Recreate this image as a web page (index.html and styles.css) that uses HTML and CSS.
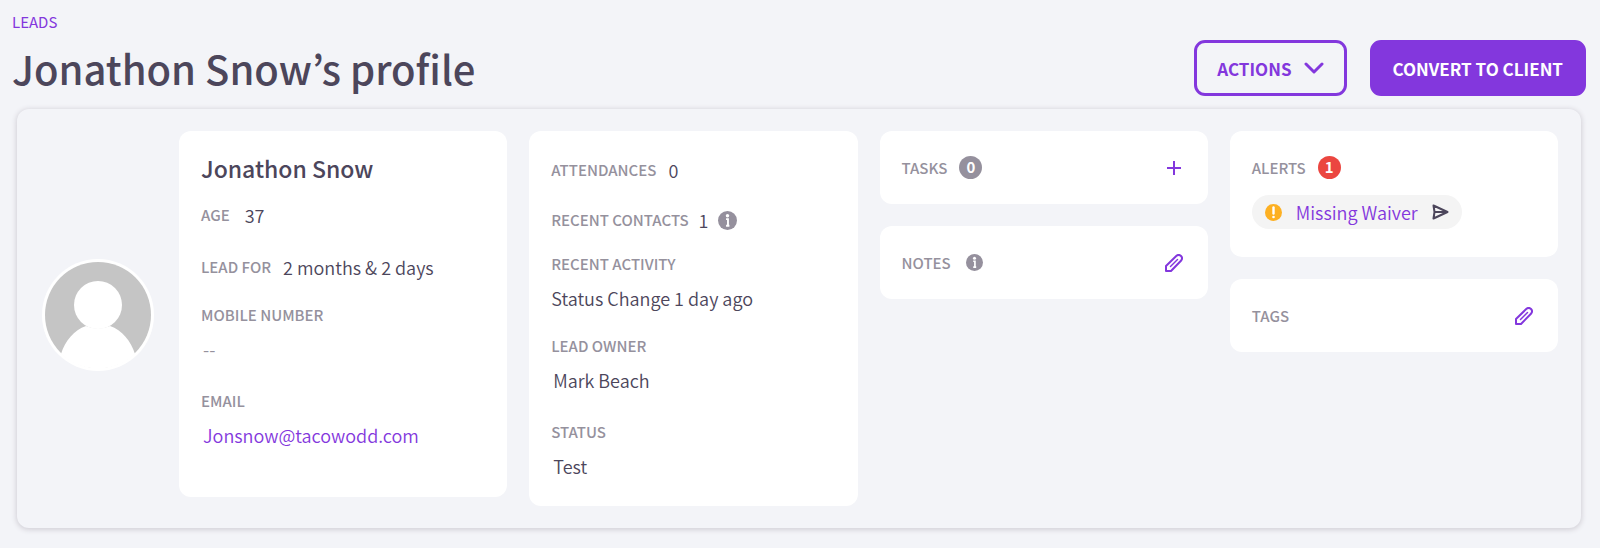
FILE: index.html
```html
<!DOCTYPE html>
<html lang="en">
  <head>
    <meta charset="utf-8">
    <meta name="viewport" content="width=device-width, initial-scale=1">
    <title>Jonathon Snow’s profile</title>
    <link rel="stylesheet" href="styles.css">
  </head>
  <body>
    <header class="header">
      <div class="heading">
        <a class="breadcrumb" href="#">LEADS</a>
        <h1 class="title">Jonathon Snow’s profile</h1>
      </div>
      <div class="buttons">
        <button class="btn btn-outline" type="button">
          ACTIONS
          <svg width="20" height="12" viewBox="0 0 20 12" fill="none" stroke="currentColor" stroke-width="3" stroke-linecap="round" stroke-linejoin="round"><path d="M2 2l8 8 8-8"/></svg>
        </button>
        <button class="btn btn-solid" type="button">CONVERT TO CLIENT</button>
      </div>
    </header>

    <main class="panel">
      <div class="avatar">
        <svg class="avatar-img" viewBox="0 0 112 112">
          <circle cx="56" cy="56" r="56" fill="#fff"/>
          <circle cx="56" cy="56" r="53" fill="#c5c5c5"/>
          <circle cx="56" cy="46" r="24" fill="#fff"/>
          <path d="M19 95C23 82 32 71 44 67Q56 72 68 67C80 71 89 82 93 95A54 54 0 0 1 19 95Z" fill="#fff"/>
        </svg>
      </div>

      <section class="card details">
        <h2 class="name">Jonathon Snow</h2>
        <dl class="fields">
          <div class="field row age">
            <dt>AGE</dt>
            <dd>37</dd>
          </div>
          <div class="field row tight">
            <dt>LEAD FOR</dt>
            <dd>2 months &amp; 2 days</dd>
          </div>
          <div class="field">
            <dt>MOBILE NUMBER</dt>
            <dd class="editable empty">--</dd>
          </div>
          <div class="field">
            <dt>EMAIL</dt>
            <dd class="editable"><a href="mailto:Jonsnow@tacowodd.com">Jonsnow@tacowodd.com</a></dd>
          </div>
        </dl>
      </section>

      <section class="card activity">
        <dl class="fields">
          <div class="field row">
            <dt>ATTENDANCES</dt>
            <dd>0</dd>
          </div>
          <div class="field row contacts">
            <dt>RECENT CONTACTS</dt>
            <dd>1</dd>
            <dd class="info">
              <svg width="19" height="19" viewBox="0 0 20 20"><circle cx="10" cy="10" r="10" fill="#95909d"/><path d="M8.500 8.500h2v7M8.500 15.500h3.500" fill="none" stroke="#fff" stroke-width="2"/><circle cx="10" cy="5" r="1.800" fill="#fff"/></svg>
            </dd>
          </div>
          <div class="field tight">
            <dt>RECENT ACTIVITY</dt>
            <dd>Status Change 1 day ago</dd>
          </div>
          <div class="field">
            <dt>LEAD OWNER</dt>
            <dd class="editable">Mark Beach</dd>
          </div>
          <div class="field">
            <dt>STATUS</dt>
            <dd class="editable">Test</dd>
          </div>
        </dl>
      </section>

      <div class="column">
        <section class="card">
          <div class="card-head">
            <h3 class="label">TASKS</h3>
            <span class="badge">0</span>
            <button class="icon-btn" type="button" aria-label="Add task">
              <svg width="18" height="18" viewBox="0 0 18 18" stroke="currentColor" stroke-width="2"><path d="M9 2v14M2 9h14"/></svg>
            </button>
          </div>
        </section>
        <section class="card">
          <div class="card-head">
            <h3 class="label">NOTES</h3>
            <svg class="note-info" width="17" height="17" viewBox="0 0 20 20"><circle cx="10" cy="10" r="10" fill="#95909d"/><path d="M8.500 8.500h2v7M8.500 15.500h3.500" fill="none" stroke="#fff" stroke-width="2"/><circle cx="10" cy="5" r="1.800" fill="#fff"/></svg>
            <button class="icon-btn" type="button" aria-label="Edit notes">
              <svg width="18" height="18" viewBox="0 0 18 18" fill="none" stroke="currentColor" stroke-width="2" stroke-linejoin="round"><path d="M1 17v-5L11.500 1.800Q14 0 16 2T16.200 6.500L6 17z"/><path d="M5.500 12.500l7-7" stroke-width="1.500" stroke-linecap="round"/></svg>
            </button>
          </div>
        </section>
      </div>

      <div class="column">
        <section class="card alerts">
          <div class="card-head">
            <h3 class="label">ALERTS</h3>
            <span class="badge badge-red">1</span>
          </div>
          <div class="chip">
            <svg width="17" height="17" viewBox="0 0 17 17"><circle cx="8.500" cy="8.500" r="8.500" fill="#fdb022"/><path d="M8.500 3.500v6" stroke="#fff" stroke-width="2.400" stroke-linecap="round"/><circle cx="8.500" cy="13" r="1.300" fill="#fff"/></svg>
            <a href="#">Missing Waiver</a>
            <button class="send" type="button" aria-label="Send waiver">
              <svg width="17" height="16" viewBox="0 0 17 16" fill="none" stroke="currentColor" stroke-width="2" stroke-linejoin="round"><path d="M1.500 1.500L15.500 8l-14 6.500L2.500 8zM2.500 8h12"/></svg>
            </button>
          </div>
        </section>
        <section class="card">
          <div class="card-head">
            <h3 class="label">TAGS</h3>
            <button class="icon-btn" type="button" aria-label="Edit tags">
              <svg width="18" height="18" viewBox="0 0 18 18" fill="none" stroke="currentColor" stroke-width="2" stroke-linejoin="round"><path d="M1 17v-5L11.500 1.800Q14 0 16 2T16.200 6.500L6 17z"/><path d="M5.500 12.500l7-7" stroke-width="1.500" stroke-linecap="round"/></svg>
            </button>
          </div>
        </section>
      </div>
    </main>
  </body>
</html>
```
FILE: styles.css
```css
* {
  box-sizing: border-box;
}

body {
  margin: 0;
  padding: 12px 14px 20px 12px;
  background-color: #f3f4f8;
  color: #4c465b;
  font-family: "Noto Sans CJK JP", "Noto Sans CJK SC", sans-serif;
  font-size: 18px;
  font-weight: 350;
  line-height: 24px;
}

h1,
h2,
h3,
dl,
dd {
  margin: 0;
}

a {
  color: #8337dd;
  text-decoration: none;
}

button {
  font-family: inherit;
  cursor: pointer;
}

.header {
  display: flex;
  justify-content: space-between;
  align-items: flex-end;
}

.breadcrumb {
  display: block;
  font-size: 15px;
  font-weight: 400;
  line-height: 20px;
}

.title {
  margin-top: 8px;
  font-size: 40px;
  font-weight: 500;
  line-height: 56px;
}

.buttons {
  display: flex;
  gap: 23px;
}

.btn {
  display: flex;
  align-items: center;
  gap: 12px;
  height: 56px;
  padding: 0 20px;
  border: 3px solid #8337dd;
  border-radius: 11px;
  font-size: 17px;
  font-weight: 700;
}

.btn-outline {
  background-color: transparent;
  color: #8337dd;
}

.btn-solid {
  background-color: #8337dd;
  color: #fff;
}

.panel {
  display: grid;
  grid-template-columns: 118px repeat(4, 1fr);
  gap: 22px;
  align-items: start;
  margin: 13px 5px 0;
  padding: 22px 23px 22px 22px;
  border-radius: 12px;
  box-shadow: 0 1px 5px 1px #d3d1d8;
  background-color: #f3f4f8;
}

.avatar {
  display: flex;
  align-self: center;
  justify-content: center;
  padding-bottom: 8px;
}

.avatar-img {
  width: 112px;
  height: 112px;
}

.card {
  padding: 22px;
  border-radius: 12px;
  background-color: #fff;
}

.column {
  display: flex;
  flex-direction: column;
  gap: 22px;
}

.name {
  margin-bottom: 20px;
  font-size: 23px;
  font-weight: 500;
  line-height: 30px;
}

.activity {
  padding-top: 27px;
}

.field {
  margin-bottom: 28px;
}

.field dt,
.label {
  color: #95919d;
  font-size: 15px;
  font-weight: 500;
  line-height: 24px;
}

.field dd {
  margin-top: 10px;
}

.row {
  display: flex;
  align-items: center;
  gap: 12px;
}

.row dd {
  margin-top: 0;
}

.age {
  gap: 15px;
}

.tight {
  margin-bottom: 24px;
}

.activity .row {
  margin-bottom: 26px;
}

.activity .contacts {
  gap: 10px;
  margin-bottom: 20px;
}

.activity .field:last-child {
  margin-bottom: 6px;
}

.field .editable {
  padding-left: 2px;
}

.empty {
  color: #95919d;
}

.row .info {
  display: flex;
}

.card-head {
  display: flex;
  align-items: center;
  gap: 12px;
  height: 29px;
}

.badge {
  width: 23px;
  height: 23px;
  border-radius: 50%;
  background-color: #95909d;
  color: #fff;
  font-size: 15px;
  font-weight: 700;
  line-height: 22px;
  text-align: center;
}

.badge-red {
  background-color: #eb4640;
}

.note-info {
  margin-left: 3px;
}

.icon-btn {
  display: flex;
  margin-left: auto;
  padding: 3px;
  border: 0;
  background: none;
  color: #8337dd;
}

.alerts {
  padding-bottom: 28px;
}

.chip {
  display: flex;
  align-items: center;
  width: fit-content;
  height: 34px;
  margin-top: 13px;
  padding: 0 13px;
  border-radius: 17px;
  background-color: #f4f4f4;
}

.chip a {
  margin: 0 14px;
}

.send {
  display: flex;
  padding: 0;
  border: 0;
  background: none;
  color: #4c465b;
}
```
